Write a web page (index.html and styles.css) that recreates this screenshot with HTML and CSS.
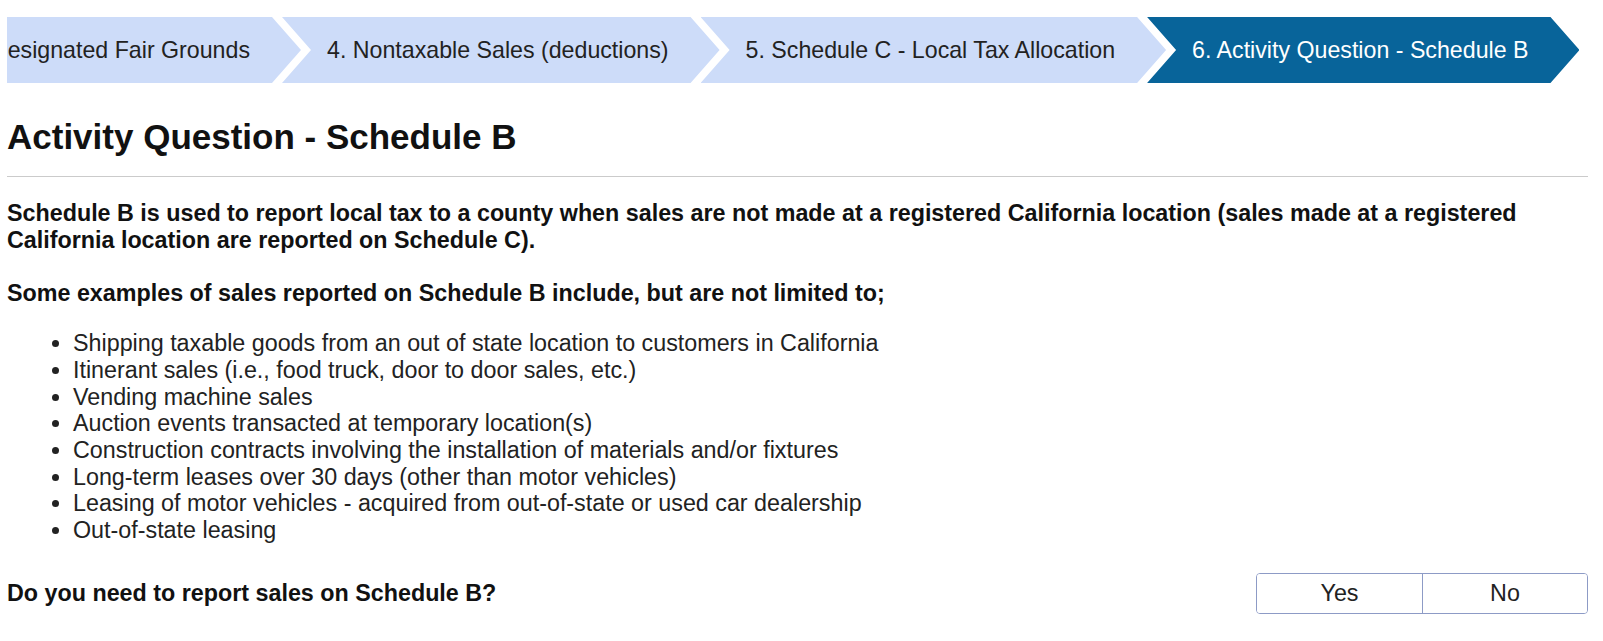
FILE: index.html
```html
<!DOCTYPE html>
<html lang="en">
<head>
    <meta charset="UTF-8">
    <meta name="viewport" content="width=device-width, initial-scale=1.0">
    <title>Activity Question - Schedule B</title>
    <link rel="stylesheet" href="styles.css">
</head>
<body>
    <div class="page">
        <!-- return steps (scrolled to the current step) -->
        <nav class="steps">
            <div class="step step-first"><span>esignated Fair Grounds</span></div>
            <div class="step">4. Nontaxable Sales (deductions)</div>
            <div class="step">5. Schedule C - Local Tax Allocation</div>
            <div class="step active">6. Activity Question - Schedule B</div>
        </nav>

        <h1 class="title">Activity Question - Schedule B</h1>

        <div class="content">
            <p class="lead">Schedule B is used to report local tax to a county when sales are not made at a registered California location (sales made at a registered California location are reported on Schedule C).</p>
            <p class="lead lead-list">Some examples of sales reported on Schedule B include, but are not limited to;</p>
            <ul class="examples">
                <li>Shipping taxable goods from an out of state location to customers in California</li>
                <li>Itinerant sales (i.e., food truck, door to door sales, etc.)</li>
                <li>Vending machine sales</li>
                <li>Auction events transacted at temporary location(s)</li>
                <li>Construction contracts involving the installation of materials and/or fixtures</li>
                <li>Long-term leases over 30 days (other than motor vehicles)</li>
                <li>Leasing of motor vehicles - acquired from out-of-state or used car dealership</li>
                <li>Out-of-state leasing</li>
            </ul>

            <div class="question">
                <label class="question-text">Do you need to report sales on Schedule B?</label>
                <div class="toggle">
                    <button type="button">Yes</button>
                    <button type="button">No</button>
                </div>
            </div>
        </div>
    </div>
</body>
</html>
```

FILE: styles.css
```css
body {
    margin: 0;
    padding: 0;
    background-color: #fff;
    font-family: "Liberation Sans", Arial, sans-serif;
    font-size: 23.3px;
    line-height: 26.7px;
    color: #1b1b1b;
}
.page {
    padding: 17px 15px 0 7px;
}
/* steps bar */
.steps {
    display: flex;
    height: 66px;
    overflow: hidden;
    font-size: 23.2px;
}
.step {
    flex: none;
    display: flex;
    align-items: center;
    box-sizing: border-box;
    padding: 0 51px 0 45px;
    margin-left: -19px;
    background-color: #cddcf9;
    color: #222;
    white-space: nowrap;
    clip-path: polygon(0 0, calc(100% - 29px) 0, 100% 50%, calc(100% - 29px) 100%, 0 100%, 29px 50%);
}
.step-first {
    width: 294px;
    margin-left: 0;
    padding-left: 0;
    justify-content: flex-end;
    clip-path: polygon(0 0, calc(100% - 29px) 0, 100% 50%, calc(100% - 29px) 100%, 0 100%);
}
.step.active {
    background-color: #08649a;
    color: #fff;
}
.title {
    margin: 34px 0 0;
    padding-bottom: 19px;
    border-bottom: 1px solid #cbcbcb;
    font-size: 35px;
    line-height: 40px;
    font-weight: bold;
    color: #111;
}
.content {
    padding-top: 23px;
}
.lead {
    margin: 0 0 26.6px;
    font-weight: bold;
    color: #111;
}
.lead-list {
    margin-bottom: 23.5px;
}
.examples {
    margin: 0;
    padding-left: 66px;
    color: #222;
}
.question {
    display: flex;
    justify-content: space-between;
    align-items: center;
    margin-top: 29px;
}
.question-text {
    font-weight: bold;
    color: #111;
}
.toggle {
    display: flex;
    border: 1px solid #8d9bc6;
    border-radius: 4px;
    overflow: hidden;
}
.toggle button {
    width: 165px;
    height: 39px;
    padding: 0;
    border: none;
    background: #fff;
    font-family: inherit;
    font-size: 23.3px;
    color: #222;
    cursor: pointer;
}
.toggle button + button {
    border-left: 1px solid #8d9bc6;
}
```
